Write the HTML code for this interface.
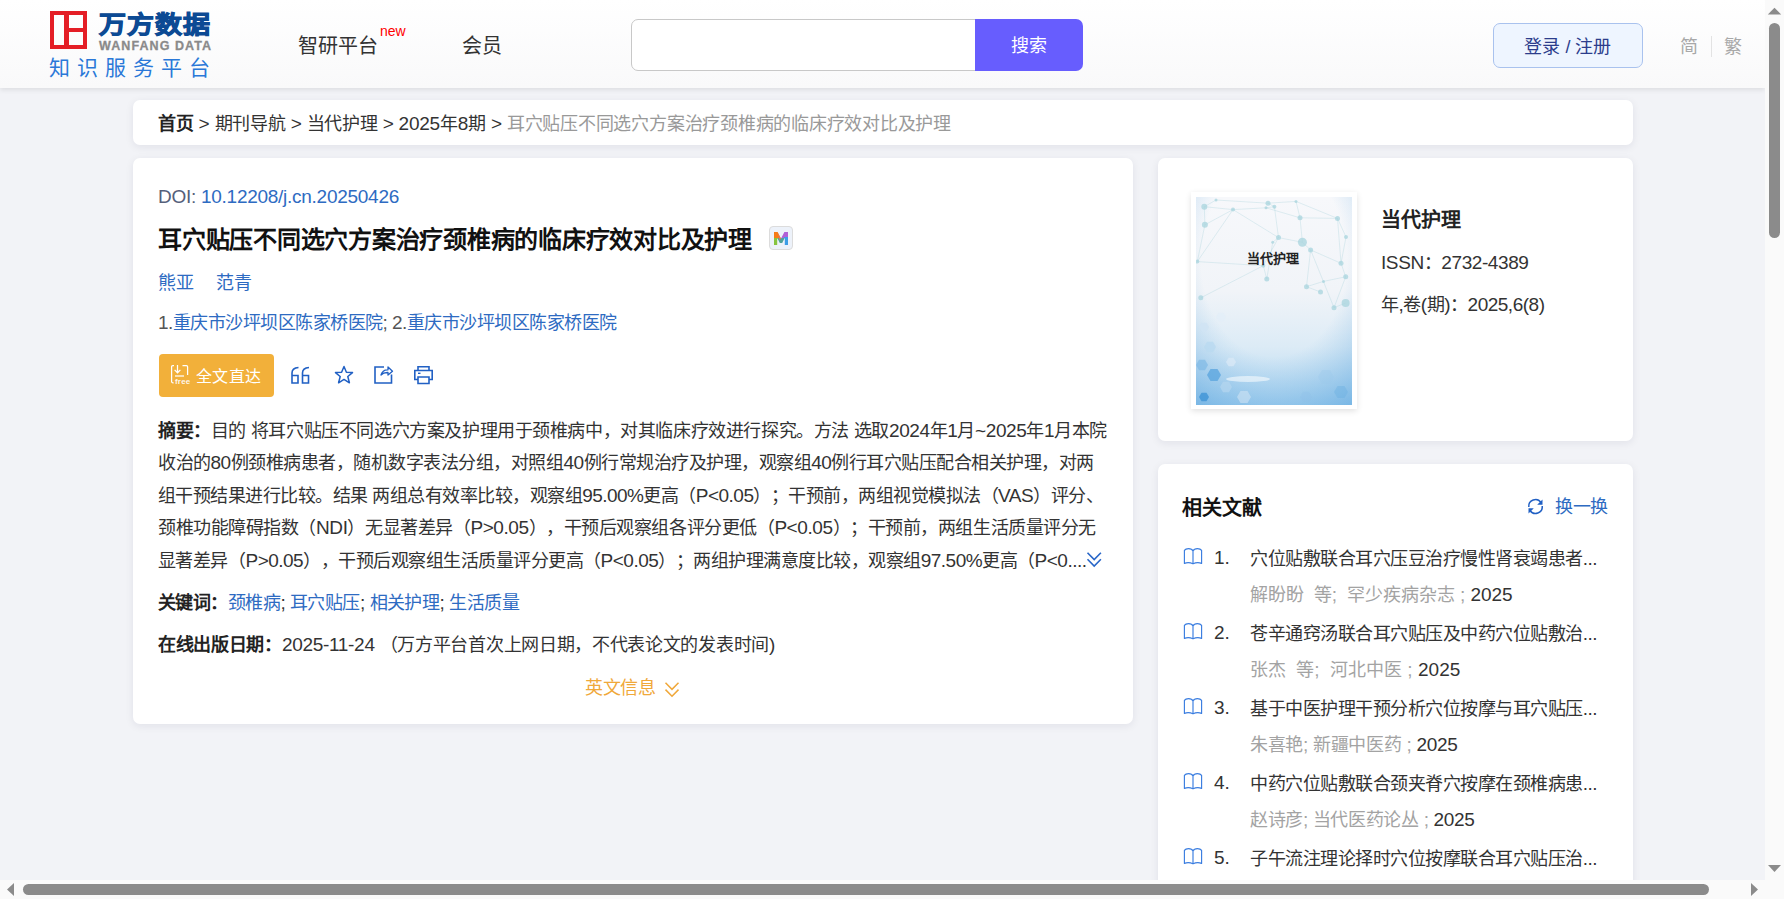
<!DOCTYPE html>
<html lang="zh-CN">
<head>
<meta charset="utf-8">
<title>耳穴贴压不同选穴方案治疗颈椎病的临床疗效对比及护理</title>
<style>
*{margin:0;padding:0;box-sizing:border-box;}
html,body{width:1784px;height:899px;overflow:hidden;}
body{text-autospace:no-autospace;text-spacing-trim:space-all;font-family:"Liberation Sans",sans-serif;background:#f2f3f7;color:#333;position:relative;font-size:18px;}
.abs{position:absolute;white-space:nowrap;}
#hdr{position:absolute;left:0;top:0;width:1765px;height:88px;background:linear-gradient(#ffffff,#f9f9fa);box-shadow:0 2px 5px rgba(0,0,0,.09);}
.card{position:absolute;background:#fff;border-radius:7px;box-shadow:0 2px 8px rgba(20,30,60,.08);}
.blue{color:#2e6bc2;}
.t18{font-size:18px;line-height:26px;}
.a{font-size:19px;}
.gray{color:#a3a3a3;}
</style>
</head>
<body>
<div id="hdr">
<div class="abs" style="left:50px;top:11px;width:37px;height:38px;border:4.5px solid #e41e26;"></div>
<div class="abs" style="left:64px;top:11px;width:4.5px;height:38px;background:#e41e26;"></div>
<div class="abs" style="left:64px;top:27.5px;width:23px;height:4.5px;background:#e41e26;"></div>
<div class="abs" style="left:99px;top:10.5px;font-size:27px;font-weight:bold;color:#0c4a94;line-height:32px;letter-spacing:1.0px;transform:scaleY(0.88);-webkit-text-stroke:1.1px #0c4a94;transform-origin:0 0;">万方数据</div>
<div class="abs" style="left:99px;top:39.5px;font-size:12.5px;font-weight:bold;color:#8a8a8a;line-height:13px;letter-spacing:1.08px;-webkit-text-stroke:0.3px #8a8a8a;">WANFANG DATA</div>
<div class="abs" style="left:49px;top:56px;font-size:21px;color:#2a78d8;line-height:24px;letter-spacing:7px;">知识服务平台</div>
<div class="abs" style="left:298px;top:34px;font-size:20px;color:#333;line-height:24px;">智研平台</div>
<div class="abs" style="left:380px;top:23px;font-size:14px;color:#f00;line-height:16px;">new</div>
<div class="abs" style="left:462px;top:34px;font-size:20px;color:#333;line-height:24px;">会员</div>
<div class="abs" style="left:631px;top:19px;width:352px;height:52px;border:1px solid #c8c8c8;border-radius:7px 0 0 7px;background:#fff;"></div>
<div class="abs" style="left:975px;top:19px;width:108px;height:52px;background:#675dfe;border-radius:0 7px 7px 0;color:#fff;font-size:18px;line-height:54px;text-align:center;">搜索</div>
<div class="abs" style="left:1493px;top:23px;width:150px;height:45px;border:1px solid #a9c2ee;border-radius:7px;background:#eef5ff;color:#2c3d8c;font-size:18px;line-height:46px;text-align:center;">登录 / 注册</div>
<div class="abs" style="left:1680px;top:34.5px;font-size:18px;color:#a8a8a8;line-height:24px;">简</div>
<div class="abs" style="left:1711px;top:36px;width:1px;height:21px;background:#e3e3e3;"></div>
<div class="abs" style="left:1724px;top:34.5px;font-size:18px;color:#a8a8a8;line-height:24px;">繁</div>
</div>
<div class="card" style="left:133px;top:100px;width:1500px;height:45px;"></div>
<div class="abs t18" id="bc" style="letter-spacing:-0.232px;color:#333;left:158px;top:111px;"><b style="color:#222">首页</b><span class="a"> &gt; </span>期刊导航<span class="a"> &gt; </span>当代护理<span class="a"> &gt; </span><span class="a">2025</span>年<span class="a">8</span>期<span class="a"> &gt; </span><span style="color:#999">耳穴贴压不同选穴方案治疗颈椎病的临床疗效对比及护理</span></div>
<div class="card" style="left:133px;top:158px;width:1000px;height:566px;"></div>
<div class="abs t18" id="doi" style="letter-spacing:-0.269px;color:#55607a;left:158px;top:184px;"><span class="a">DOI: </span><span class="blue"><span class="a">10.12208/j.cn.20250426</span></span></div>
<div class="abs" id="title" style="letter-spacing:-0.241px;left:158px;top:224px;font-size:24px;line-height:32px;color:#111;font-weight:bold;">耳穴贴压不同选穴方案治疗颈椎病的临床疗效对比及护理</div>
<div class="abs" style="left:769px;top:226px;width:24px;height:24px;border:1.5px solid #dcdcdc;border-radius:4px;background:#edf2fa;"></div>
<svg class="abs" style="left:773px;top:231px" width="16" height="15" viewBox="0 0 16 15">
  <defs><clipPath id="mc"><path d="M1 14 V1 H4.6 L8 7.6 L11.4 1 H15 V14 H11.8 V6.8 L9.2 12 H6.8 L4.2 6.8 V14 Z"/></clipPath></defs>
  <g clip-path="url(#mc)">
    <rect x="0" y="0" width="8" height="8" fill="#f67b17"/>
    <rect x="0" y="7" width="5" height="8" fill="#86c440"/>
    <rect x="5" y="7" width="6" height="8" fill="#4fa39a"/>
    <rect x="8" y="0" width="8" height="7" fill="#b060d6"/>
    <rect x="11" y="6" width="5" height="9" fill="#3c9de6"/>
    <path d="M4.6 1 L8 7.6 L6.5 9 Z" fill="#e9735a"/>
  </g>
</svg>
<div class="abs t18" style="left:158px;top:269.5px;"><span class="blue">熊亚</span><span class="blue" style="margin-left:22px">范青</span></div>
<div class="abs t18" id="aff" style="letter-spacing:-0.526px;color:#555;left:158px;top:310px;"><span class="a">1.</span><span class="blue">重庆市沙坪坝区陈家桥医院</span><span class="a">; 2.</span><span class="blue">重庆市沙坪坝区陈家桥医院</span></div>
<div class="abs" style="left:159px;top:354px;width:115px;height:43px;background:#f2b03a;border-radius:4px;"></div>
<svg class="abs" style="left:170px;top:364px" width="22" height="21" viewBox="0 0 22 21">
  <path d="M4 1.6 H2.8 Q1.6 1.6 1.6 2.8 V17.6 Q1.6 18.8 2.8 18.8 H3.6" fill="none" stroke="#fff" stroke-width="1.25"/>
  <path d="M12.5 1.6 H16.4 Q17.6 1.6 17.6 2.8 V11" fill="none" stroke="#fff" stroke-width="1.25"/>
  <path d="M7.5 1 V8.8 M4.6 5.9 L7.5 8.8 L10.4 5.9" fill="none" stroke="#fff" stroke-width="1.25"/>
  <path d="M5 12 H14" stroke="#fff" stroke-width="1.25"/>
  <text x="5" y="19.6" font-size="8" font-weight="bold" font-family="Liberation Sans" fill="#fff" fill-opacity=".9" letter-spacing="0.2">free</text>
</svg>
<div class="abs" style="left:196px;top:363.5px;font-size:16px;line-height:26px;color:#fff;letter-spacing:0.3px;">全文直达</div>
<svg class="abs" style="left:289px;top:365px" width="23" height="21" viewBox="0 0 23 21">
  <path d="M3 10.5 H9 V18 H3 Z M3 18 V8 Q3 3 9.5 2.5" fill="none" stroke="#2160c4" stroke-width="1.6"/>
  <path d="M13.5 10.5 H19.5 V18 H13.5 Z M13.5 18 V8 Q13.5 3 20 2.5" fill="none" stroke="#2160c4" stroke-width="1.6"/>
</svg>
<svg class="abs" style="left:333px;top:364px" width="22" height="22" viewBox="0 0 22 22">
  <path d="M11 2.5 L13.4 8.2 L19.5 8.6 L14.8 12.5 L16.4 18.8 L11 15.4 L5.6 18.8 L7.2 12.5 L2.5 8.6 L8.6 8.2 Z" fill="none" stroke="#2160c4" stroke-width="1.5" stroke-linejoin="round"/>
</svg>
<svg class="abs" style="left:372px;top:364px" width="23" height="22" viewBox="0 0 23 22">
  <path d="M12 3 H3 V19 H19.5 V10.5" fill="none" stroke="#2160c4" stroke-width="1.6"/>
  <path d="M9 11 Q10.5 5.5 16 5.8 V3 L20.5 7.3 L16 11 V8.5 Q11.5 8.3 9 11 Z" fill="none" stroke="#2160c4" stroke-width="1.3" stroke-linejoin="round"/>
</svg>
<svg class="abs" style="left:412px;top:364px" width="23" height="22" viewBox="0 0 23 22">
  <path d="M6 6.5 V2.8 H17 V6.5" fill="none" stroke="#2160c4" stroke-width="1.6"/>
  <path d="M6 15.5 H2.8 V6.5 H20.2 V15.5 H17" fill="none" stroke="#2160c4" stroke-width="1.6"/>
  <path d="M6 13 H17 V19.5 H6 Z" fill="none" stroke="#2160c4" stroke-width="1.6"/>
  <path d="M6 9.3 H8.5" stroke="#2160c4" stroke-width="1.4"/>
</svg>
<div class="abs" id="ab0" style="letter-spacing:-0.408px;left:158px;top:414.5px;font-size:18px;line-height:32.5px;color:#333;"><b style="color:#222">摘要：</b>目的<span class="a"> </span>将耳穴贴压不同选穴方案及护理用于颈椎病中，对其临床疗效进行探究。方法<span class="a"> </span>选取<span class="a">2024</span>年<span class="a">1</span>月<span class="a">~2025</span>年<span class="a">1</span>月本院</div>
<div class="abs" id="ab1" style="letter-spacing:-0.490px;left:158px;top:447.0px;font-size:18px;line-height:32.5px;color:#333;">收治的<span class="a">80</span>例颈椎病患者，随机数字表法分组，对照组<span class="a">40</span>例行常规治疗及护理，观察组<span class="a">40</span>例行耳穴贴压配合相关护理，对两</div>
<div class="abs" id="ab2" style="letter-spacing:-0.527px;left:158px;top:479.5px;font-size:18px;line-height:32.5px;color:#333;">组干预结果进行比较。结果<span class="a"> </span>两组总有效率比较，观察组<span class="a">95.00%</span>更高（<span class="a">P&lt;0.05</span>）；干预前，两组视觉模拟法（<span class="a">VAS</span>）评分、</div>
<div class="abs" id="ab3" style="letter-spacing:-0.439px;left:158px;top:512.0px;font-size:18px;line-height:32.5px;color:#333;">颈椎功能障碍指数（<span class="a">NDI</span>）无显著差异（<span class="a">P&gt;0.05</span>），干预后观察组各评分更低（<span class="a">P&lt;0.05</span>）；干预前，两组生活质量评分无</div>
<div class="abs" id="ab4" style="letter-spacing:-0.507px;left:158px;top:544.5px;font-size:18px;line-height:32.5px;color:#333;">显著差异（<span class="a">P&gt;0.05</span>），干预后观察组生活质量评分更高（<span class="a">P&lt;0.05</span>）；两组护理满意度比较，观察组<span class="a">97.50%</span>更高（<span class="a">P&lt;0....</span></div>
<svg class="abs" style="left:1086px;top:551px" width="17" height="17" viewBox="0 0 17 17"><path d="M1.5 1.8 L8.2 8.6 L14.9 1.8 M1.5 8.2 L8.2 15 L14.9 8.2" fill="none" stroke="#2866c8" stroke-width="1.6"/></svg>
<div class="abs t18" id="kw" style="letter-spacing:-0.510px;color:#333;left:158px;top:589.5px;"><b style="color:#222">关键词：</b><span class="blue">颈椎病</span><span class="a">; </span><span class="blue">耳穴贴压</span><span class="a">; </span><span class="blue">相关护理</span><span class="a">; </span><span class="blue">生活质量</span></div>
<div class="abs t18" id="date" style="letter-spacing:-0.303px;color:#333;left:158px;top:632px;"><b style="color:#222">在线出版日期：</b><span class="a">2025-11-24 </span>（万方平台首次上网日期，不代表论文的发表时间<span class="a">)</span></div>
<div class="abs t18" style="left:585px;top:675px;color:#f0a83a;letter-spacing:-0.45px;">英文信息</div>
<svg class="abs" style="left:664px;top:681px" width="16" height="17" viewBox="0 0 16 17"><path d="M1.5 1.8 L8 8.4 L14.5 1.8 M1.5 8.6 L8 15.2 L14.5 8.6" fill="none" stroke="#f0a83a" stroke-width="1.5"/></svg>
<div class="card" style="left:1158px;top:158px;width:475px;height:283px;"></div>
<div class="abs" style="left:1191px;top:192px;width:166px;height:217px;background:#fff;box-shadow:0 2px 6px rgba(0,0,0,.12);"></div>
<svg class="abs" style="left:1196px;top:197px" width="156" height="208" viewBox="0 0 156 208"><defs><linearGradient id="cg" x1="0" y1="0" x2="0" y2="1"><stop offset="0" stop-color="#f7f8fb"/><stop offset=".45" stop-color="#f1f4f8"/><stop offset=".72" stop-color="#dcebf6"/><stop offset="1" stop-color="#acd4f0"/></linearGradient><radialGradient id="cg2" cx=".5" cy=".3" r=".85"><stop offset="0" stop-color="#4d9fdc" stop-opacity="0"/><stop offset=".55" stop-color="#4d9fdc" stop-opacity="0"/><stop offset="1" stop-color="#3f95d8" stop-opacity=".45"/></radialGradient></defs><rect width="156" height="208" fill="url(#cg)"/><rect width="156" height="208" fill="url(#cg2)"/><line x1="8.3" y1="9.7" x2="37.0" y2="12.6" stroke="#a6d2da" stroke-opacity=".6" stroke-width=".55"/><line x1="8.3" y1="9.7" x2="8.9" y2="27.8" stroke="#a6d2da" stroke-opacity=".6" stroke-width=".55"/><line x1="8.9" y1="27.8" x2="37.0" y2="12.6" stroke="#a6d2da" stroke-opacity=".6" stroke-width=".55"/><line x1="37.0" y1="12.6" x2="70.0" y2="10.8" stroke="#a6d2da" stroke-opacity=".6" stroke-width=".55"/><line x1="37.0" y1="12.6" x2="82.5" y2="40.6" stroke="#a6d2da" stroke-opacity=".6" stroke-width=".55"/><line x1="72.0" y1="6.2" x2="78.4" y2="9.7" stroke="#a6d2da" stroke-opacity=".6" stroke-width=".55"/><line x1="78.4" y1="9.7" x2="70.0" y2="10.8" stroke="#a6d2da" stroke-opacity=".6" stroke-width=".55"/><line x1="72.0" y1="6.2" x2="100.0" y2="4.4" stroke="#a6d2da" stroke-opacity=".6" stroke-width=".55"/><line x1="100.0" y1="4.4" x2="104.0" y2="20.8" stroke="#a6d2da" stroke-opacity=".6" stroke-width=".55"/><line x1="104.0" y1="20.8" x2="106.4" y2="45.3" stroke="#a6d2da" stroke-opacity=".6" stroke-width=".55"/><line x1="104.0" y1="20.8" x2="141.5" y2="21.4" stroke="#a6d2da" stroke-opacity=".6" stroke-width=".55"/><line x1="141.5" y1="21.4" x2="145.0" y2="66.3" stroke="#a6d2da" stroke-opacity=".6" stroke-width=".55"/><line x1="82.5" y1="40.6" x2="76.7" y2="45.3" stroke="#a6d2da" stroke-opacity=".6" stroke-width=".55"/><line x1="82.5" y1="40.6" x2="106.4" y2="45.3" stroke="#a6d2da" stroke-opacity=".6" stroke-width=".55"/><line x1="106.4" y1="45.3" x2="114.6" y2="52.9" stroke="#a6d2da" stroke-opacity=".6" stroke-width=".55"/><line x1="114.6" y1="52.9" x2="145.0" y2="66.3" stroke="#a6d2da" stroke-opacity=".6" stroke-width=".55"/><line x1="114.6" y1="52.9" x2="110.5" y2="89.7" stroke="#a6d2da" stroke-opacity=".6" stroke-width=".55"/><line x1="1.3" y1="64.6" x2="67.3" y2="68.7" stroke="#a6d2da" stroke-opacity=".6" stroke-width=".55"/><line x1="67.3" y1="68.7" x2="82.5" y2="40.6" stroke="#a6d2da" stroke-opacity=".6" stroke-width=".55"/><line x1="67.3" y1="68.7" x2="4.8" y2="100.8" stroke="#a6d2da" stroke-opacity=".6" stroke-width=".55"/><line x1="110.5" y1="89.7" x2="127.5" y2="84.4" stroke="#a6d2da" stroke-opacity=".6" stroke-width=".55"/><line x1="127.5" y1="84.4" x2="149.7" y2="79.8" stroke="#a6d2da" stroke-opacity=".6" stroke-width=".55"/><line x1="149.7" y1="79.8" x2="145.0" y2="66.3" stroke="#a6d2da" stroke-opacity=".6" stroke-width=".55"/><line x1="124.5" y1="95.0" x2="110.5" y2="89.7" stroke="#a6d2da" stroke-opacity=".6" stroke-width=".55"/><line x1="138.0" y1="110.7" x2="149.6" y2="106.0" stroke="#a6d2da" stroke-opacity=".6" stroke-width=".55"/><line x1="138.0" y1="110.7" x2="149.7" y2="79.8" stroke="#a6d2da" stroke-opacity=".6" stroke-width=".55"/><line x1="114.6" y1="52.9" x2="138.0" y2="110.7" stroke="#a6d2da" stroke-opacity=".6" stroke-width=".55"/><line x1="78.4" y1="9.7" x2="82.5" y2="40.6" stroke="#a6d2da" stroke-opacity=".6" stroke-width=".55"/><line x1="100.0" y1="4.4" x2="141.5" y2="21.4" stroke="#a6d2da" stroke-opacity=".6" stroke-width=".55"/><line x1="37.0" y1="12.6" x2="1.3" y2="64.6" stroke="#a6d2da" stroke-opacity=".6" stroke-width=".55"/><line x1="8.9" y1="27.8" x2="1.3" y2="64.6" stroke="#a6d2da" stroke-opacity=".6" stroke-width=".55"/><line x1="20.0" y1="3.0" x2="72.0" y2="6.2" stroke="#a6d2da" stroke-opacity=".6" stroke-width=".55"/><line x1="20.0" y1="3.0" x2="8.3" y2="9.7" stroke="#a6d2da" stroke-opacity=".6" stroke-width=".55"/><line x1="150.0" y1="40.0" x2="141.5" y2="21.4" stroke="#a6d2da" stroke-opacity=".6" stroke-width=".55"/><line x1="150.0" y1="40.0" x2="145.0" y2="66.3" stroke="#a6d2da" stroke-opacity=".6" stroke-width=".55"/><line x1="70.0" y1="10.8" x2="104.0" y2="20.8" stroke="#a6d2da" stroke-opacity=".6" stroke-width=".55"/><line x1="76.7" y1="45.3" x2="70.8" y2="82.1" stroke="#a6d2da" stroke-opacity=".6" stroke-width=".55"/><line x1="70.8" y1="82.1" x2="67.3" y2="68.7" stroke="#a6d2da" stroke-opacity=".6" stroke-width=".55"/><circle cx="8.3" cy="9.7" r="3.0" fill="#a8d4dd" fill-opacity=".75"/><circle cx="8.9" cy="27.8" r="3.0" fill="#a8d4dd" fill-opacity=".75"/><circle cx="37.0" cy="12.6" r="2.0" fill="#a8d4dd" fill-opacity=".75"/><circle cx="72.0" cy="6.2" r="2.5" fill="#a8d4dd" fill-opacity=".75"/><circle cx="78.4" cy="9.7" r="2.0" fill="#a8d4dd" fill-opacity=".75"/><circle cx="70.0" cy="10.8" r="1.5" fill="#a8d4dd" fill-opacity=".75"/><circle cx="100.0" cy="4.4" r="1.5" fill="#a8d4dd" fill-opacity=".75"/><circle cx="104.0" cy="20.8" r="2.5" fill="#a8d4dd" fill-opacity=".75"/><circle cx="141.5" cy="21.4" r="2.5" fill="#a8d4dd" fill-opacity=".75"/><circle cx="82.5" cy="40.6" r="2.5" fill="#a8d4dd" fill-opacity=".75"/><circle cx="76.7" cy="45.3" r="1.5" fill="#a8d4dd" fill-opacity=".75"/><circle cx="106.4" cy="45.3" r="4.5" fill="#a8d4dd" fill-opacity=".75"/><circle cx="114.6" cy="52.9" r="2.5" fill="#a8d4dd" fill-opacity=".75"/><circle cx="1.3" cy="64.6" r="2.0" fill="#a8d4dd" fill-opacity=".75"/><circle cx="67.3" cy="68.7" r="2.0" fill="#a8d4dd" fill-opacity=".75"/><circle cx="145.0" cy="66.3" r="2.5" fill="#a8d4dd" fill-opacity=".75"/><circle cx="70.8" cy="82.1" r="2.5" fill="#a8d4dd" fill-opacity=".75"/><circle cx="110.5" cy="89.7" r="2.5" fill="#a8d4dd" fill-opacity=".75"/><circle cx="127.5" cy="84.4" r="1.5" fill="#a8d4dd" fill-opacity=".75"/><circle cx="149.7" cy="79.8" r="2.5" fill="#a8d4dd" fill-opacity=".75"/><circle cx="124.5" cy="95.0" r="2.5" fill="#a8d4dd" fill-opacity=".75"/><circle cx="4.8" cy="100.8" r="2.5" fill="#a8d4dd" fill-opacity=".75"/><circle cx="138.0" cy="110.7" r="2.5" fill="#a8d4dd" fill-opacity=".75"/><circle cx="149.6" cy="106.0" r="4.0" fill="#a8d4dd" fill-opacity=".75"/><circle cx="20.0" cy="3.0" r="1.5" fill="#a8d4dd" fill-opacity=".75"/><circle cx="150.0" cy="40.0" r="2.0" fill="#a8d4dd" fill-opacity=".75"/><polygon points="13.0,130.0 10.5,134.3 5.5,134.3 3.0,130.0 5.5,125.7 10.5,125.7" fill="#cfe4f4" fill-opacity="0.80"/><polygon points="20.0,150.0 17.0,155.2 11.0,155.2 8.0,150.0 11.0,144.8 17.0,144.8" fill="#b9d9f0" fill-opacity="0.80"/><polygon points="12.0,168.0 9.0,173.2 3.0,173.2 0.0,168.0 3.0,162.8 9.0,162.8" fill="#7fb9e6" fill-opacity="0.70"/><polygon points="25.0,178.0 21.5,184.1 14.5,184.1 11.0,178.0 14.5,171.9 21.5,171.9" fill="#5ca6de" fill-opacity="0.80"/><polygon points="36.0,190.0 33.0,195.2 27.0,195.2 24.0,190.0 27.0,184.8 33.0,184.8" fill="#b5d6ef" fill-opacity="0.70"/><polygon points="13.0,200.0 10.5,204.3 5.5,204.3 3.0,200.0 5.5,195.7 10.5,195.7" fill="#3f93d6" fill-opacity="0.80"/><polygon points="40.0,165.0 37.5,169.3 32.5,169.3 30.0,165.0 32.5,160.7 37.5,160.7" fill="#dbeaf6" fill-opacity="0.70"/><polygon points="55.0,200.0 51.5,206.1 44.5,206.1 41.0,200.0 44.5,193.9 51.5,193.9" fill="#cfe3f3" fill-opacity="0.60"/><polygon points="138.0,180.0 134.0,186.9 126.0,186.9 122.0,180.0 126.0,173.1 134.0,173.1" fill="#9cc8ea" fill-opacity="0.35"/><polygon points="152.0,195.0 148.5,201.1 141.5,201.1 138.0,195.0 141.5,188.9 148.5,188.9" fill="#6aaee0" fill-opacity="0.40"/><polygon points="116.0,200.0 113.0,205.2 107.0,205.2 104.0,200.0 107.0,194.8 113.0,194.8" fill="#8fc1e8" fill-opacity="0.35"/><polygon points="30.0,120.0 27.5,124.3 22.5,124.3 20.0,120.0 22.5,115.7 27.5,115.7" fill="#e2eef8" fill-opacity="0.70"/><ellipse cx="52" cy="182" rx="22" ry="3" fill="#ffffff" fill-opacity=".55"/></svg>
<div class="abs" style="left:1247px;top:249.5px;font-size:13px;line-height:18px;color:#222;font-weight:bold;">当代护理</div>
<div class="abs" style="left:1381px;top:205.5px;font-size:20px;line-height:28px;color:#222;font-weight:bold;">当代护理</div>
<div class="abs t18" id="issn" style="letter-spacing:-0.410px;color:#333;left:1381px;top:250px;"><span class="a">ISSN</span>：<span class="a">2732-4389</span></div>
<div class="abs t18" id="nj" style="letter-spacing:-0.487px;color:#333;left:1381px;top:292px;">年<span class="a">,</span>卷<span class="a">(</span>期<span class="a">)</span>：<span class="a">2025,6(8)</span></div>
<div class="card" style="left:1158px;top:464px;width:475px;height:460px;"></div>
<div class="abs" style="left:1182px;top:494px;font-size:20px;line-height:28px;color:#111;font-weight:bold;">相关文献</div>
<svg class="abs" style="left:1526px;top:497px" width="19" height="19" viewBox="0 0 19 19">
  <path d="M2.8 10 A6.7 6.7 0 0 1 15 5.5" fill="none" stroke="#2160c4" stroke-width="1.5"/>
  <path d="M16.5 2.5 V7.8 H11.2 Z" fill="#2160c4"/>
  <path d="M16.2 9 A6.7 6.7 0 0 1 4 13.5" fill="none" stroke="#2160c4" stroke-width="1.5"/>
  <path d="M2.5 16.5 V11.2 H7.8 Z" fill="#2160c4"/>
</svg>
<div class="abs t18 blue" style="left:1555px;top:494px;letter-spacing:-0.45px;">换一换</div>
<svg class="abs" style="left:1182px;top:547.0px" width="22" height="18" viewBox="0 0 22 18"><path d="M11 4 Q10 1.6 6.5 1.6 Q3.6 1.6 2.4 3.4 V16.4 Q6.5 14.6 11 16.8 Q15.5 14.6 19.6 16.4 V3.4 Q18.4 1.6 15.5 1.6 Q12 1.6 11 4 Z M11 4 V16.8" fill="none" stroke="#3a7de0" stroke-width="1.15" stroke-linejoin="round"/></svg>
<div class="abs t18" style="left:1214px;top:544.5px;color:#333;"><span class="a">1.</span></div>
<div class="abs t18" id="rt0" style="letter-spacing:-0.493px;color:#333;left:1250px;top:546px;">穴位贴敷联合耳穴压豆治疗慢性肾衰竭患者<span class="a">...</span></div>
<div class="abs t18" id="rm0" style="letter-spacing:-0.043px;left:1250px;top:582.0px;"><span class="gray">解盼盼  等<span class="a">;</span>  罕少疾病杂志<span class="a"> ; </span></span><span class="a" style="color:#333">2025</span></div>
<svg class="abs" style="left:1182px;top:622.0px" width="22" height="18" viewBox="0 0 22 18"><path d="M11 4 Q10 1.6 6.5 1.6 Q3.6 1.6 2.4 3.4 V16.4 Q6.5 14.6 11 16.8 Q15.5 14.6 19.6 16.4 V3.4 Q18.4 1.6 15.5 1.6 Q12 1.6 11 4 Z M11 4 V16.8" fill="none" stroke="#3a7de0" stroke-width="1.15" stroke-linejoin="round"/></svg>
<div class="abs t18" style="left:1214px;top:619.5px;color:#333;"><span class="a">2.</span></div>
<div class="abs t18" id="rt1" style="letter-spacing:-0.493px;color:#333;left:1250px;top:621px;">苍辛通窍汤联合耳穴贴压及中药穴位贴敷治<span class="a">...</span></div>
<div class="abs t18" id="rm1" style="letter-spacing:0.056px;left:1250px;top:657.0px;"><span class="gray">张杰  等<span class="a">;</span>  河北中医<span class="a"> ; </span></span><span class="a" style="color:#333">2025</span></div>
<svg class="abs" style="left:1182px;top:697.0px" width="22" height="18" viewBox="0 0 22 18"><path d="M11 4 Q10 1.6 6.5 1.6 Q3.6 1.6 2.4 3.4 V16.4 Q6.5 14.6 11 16.8 Q15.5 14.6 19.6 16.4 V3.4 Q18.4 1.6 15.5 1.6 Q12 1.6 11 4 Z M11 4 V16.8" fill="none" stroke="#3a7de0" stroke-width="1.15" stroke-linejoin="round"/></svg>
<div class="abs t18" style="left:1214px;top:694.5px;color:#333;"><span class="a">3.</span></div>
<div class="abs t18" id="rt2" style="letter-spacing:-0.493px;color:#333;left:1250px;top:696px;">基于中医护理干预分析穴位按摩与耳穴贴压<span class="a">...</span></div>
<div class="abs t18" id="rm2" style="letter-spacing:-0.306px;left:1250px;top:732.0px;"><span class="gray">朱喜艳<span class="a">; </span>新疆中医药<span class="a"> ; </span></span><span class="a" style="color:#333">2025</span></div>
<svg class="abs" style="left:1182px;top:772.0px" width="22" height="18" viewBox="0 0 22 18"><path d="M11 4 Q10 1.6 6.5 1.6 Q3.6 1.6 2.4 3.4 V16.4 Q6.5 14.6 11 16.8 Q15.5 14.6 19.6 16.4 V3.4 Q18.4 1.6 15.5 1.6 Q12 1.6 11 4 Z M11 4 V16.8" fill="none" stroke="#3a7de0" stroke-width="1.15" stroke-linejoin="round"/></svg>
<div class="abs t18" style="left:1214px;top:769.5px;color:#333;"><span class="a">4.</span></div>
<div class="abs t18" id="rt3" style="letter-spacing:-0.493px;color:#333;left:1250px;top:771px;">中药穴位贴敷联合颈夹脊穴按摩在颈椎病患<span class="a">...</span></div>
<div class="abs t18" id="rm3" style="letter-spacing:-0.344px;left:1250px;top:807.0px;"><span class="gray">赵诗彦<span class="a">; </span>当代医药论丛<span class="a"> ; </span></span><span class="a" style="color:#333">2025</span></div>
<svg class="abs" style="left:1182px;top:847.0px" width="22" height="18" viewBox="0 0 22 18"><path d="M11 4 Q10 1.6 6.5 1.6 Q3.6 1.6 2.4 3.4 V16.4 Q6.5 14.6 11 16.8 Q15.5 14.6 19.6 16.4 V3.4 Q18.4 1.6 15.5 1.6 Q12 1.6 11 4 Z M11 4 V16.8" fill="none" stroke="#3a7de0" stroke-width="1.15" stroke-linejoin="round"/></svg>
<div class="abs t18" style="left:1214px;top:844.5px;color:#333;"><span class="a">5.</span></div>
<div class="abs t18" id="rt4" style="letter-spacing:-0.493px;color:#333;left:1250px;top:846px;">子午流注理论择时穴位按摩联合耳穴贴压治<span class="a">...</span></div>
<div class="abs" style="left:1765px;top:0;width:19px;height:899px;background:#fafafa;"></div>
<div class="abs" style="left:0;top:880px;width:1784px;height:19px;background:#fafafa;"></div>
<div class="abs" style="left:1769px;top:23px;width:11px;height:215px;background:#8b8b8b;border-radius:6px;"></div>
<div class="abs" style="left:23px;top:884px;width:1686px;height:11px;background:#8b8b8b;border-radius:6px;"></div>
<svg class="abs" style="left:1765px;top:0" width="19" height="19"><path d="M2.8 14.5 L9.5 7.8 L16.2 14.5 Z" fill="#8b8b8b"/></svg>
<svg class="abs" style="left:1765px;top:860px" width="19" height="19"><path d="M3 5 L9.5 12 L16 5 Z" fill="#8b8b8b"/></svg>
<svg class="abs" style="left:0;top:880px" width="19" height="19"><path d="M14 3 L7 9.5 L14 16 Z" fill="#8b8b8b"/></svg>
<svg class="abs" style="left:1745px;top:880px" width="19" height="19"><path d="M6 3 L13 9.5 L6 16 Z" fill="#8b8b8b"/></svg>
</body>
</html>
